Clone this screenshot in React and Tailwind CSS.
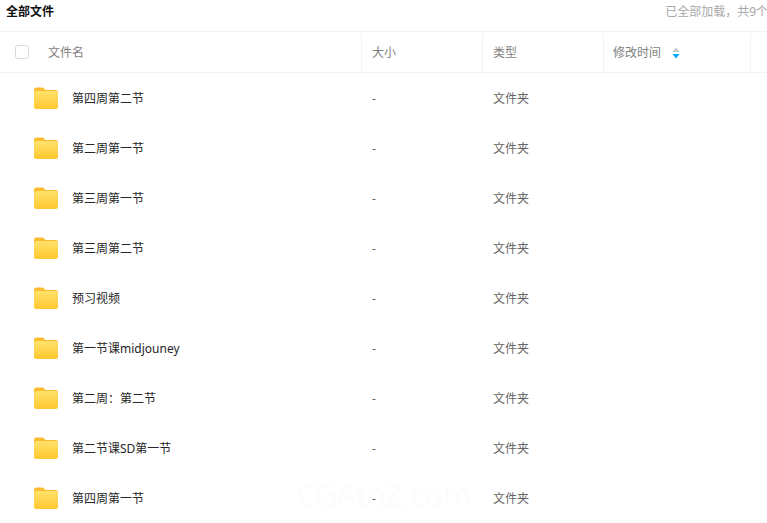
const FONT = '"Noto Sans", "Noto Sans CJK SC", sans-serif';

const files = [
  '第四周第二节',
  '第二周第一节',
  '第三周第一节',
  '第三周第二节',
  '预习视频',
  '第一节课midjouney',
  '第二周：第二节',
  '第二节课SD第一节',
  '第四周第一节',
];

const FolderIcon = () => (
  <svg width="24" height="22" viewBox="0 0 24 22">
    <defs>
      <linearGradient id="folderFront" x1="0" y1="0" x2="0" y2="1">
        <stop offset="0" stopColor="#ffe26b" />
        <stop offset="1" stopColor="#ffc72f" />
      </linearGradient>
    </defs>
    <path d="M0 3a2.5 2.5 0 0 1 2.5-2.5h5.5c1 0 1.6.4 2.2 1.1l1.3 1.4h10A2.5 2.5 0 0 1 24 6v6H0z" fill="#fbbc30" />
    <rect x="0" y="4" width="24" height="18" rx="2.5" fill="url(#folderFront)" />
  </svg>
);

const SortIcon = () => (
  <svg width="8" height="12" viewBox="0 0 8 12" className="ml-[11px]">
    <path d="M4 0.5 7.5 5H0.5z" fill="#c4c7cc" />
    <path d="M4 11.5 0.5 7H7.5z" fill="#06a7ff" />
  </svg>
);

const App = () => (
  <div className="relative h-[523px] w-[767px] overflow-hidden bg-white text-[12px]" style={{ fontFamily: FONT }}>
    {/* Top bar */}
    <div className="flex h-[32px] items-center justify-between border-b border-[#f1f2f4] pb-[7px] pl-[6px]">
      <span className="font-bold text-[#111111]">全部文件</span>
      <span className="mr-[-1px] whitespace-nowrap text-[#a8a8a8]">已全部加载，共9个</span>
    </div>

    {/* Table head */}
    <div className="flex h-[41px] border-b border-[#f1f2f4] pt-[2px] text-[#7f7f7f]">
      <div className="flex w-[362px] items-center border-r border-[#f1f2f4] pl-[15px]">
        <span className="mt-[-2px] h-[14px] w-[14px] rounded-[3px] border border-[#d9dadd] bg-white" />
        <span className="ml-[19px]">文件名</span>
      </div>
      <div className="flex w-[121px] items-center border-r border-[#f1f2f4] pl-[10px]">大小</div>
      <div className="flex w-[121px] items-center border-r border-[#f1f2f4] pl-[10px]">类型</div>
      <div className="flex w-[147px] items-center border-r border-[#f1f2f4] pl-[9px]">
        修改时间
        <SortIcon />
      </div>
    </div>

    {/* Rows */}
    {files.map((name) => (
      <div key={name} className="flex h-[50px] items-center text-[#666666]">
        <div className="flex w-[362px] items-center pl-[34px]">
          <FolderIcon />
          <span className="ml-[14px] pt-[2px] text-[#262626]">{name}</span>
        </div>
        <div className="w-[121px] pl-[10px] pt-[2px]">-</div>
        <div className="pl-[10px] pt-[2px]">文件夹</div>
      </div>
    ))}

    {/* Watermark */}
    <span className="absolute left-[297px] top-[472px] text-[30px] text-[#fcfcfc]">CGAtoZ.com</span>
  </div>
);

export default App;
